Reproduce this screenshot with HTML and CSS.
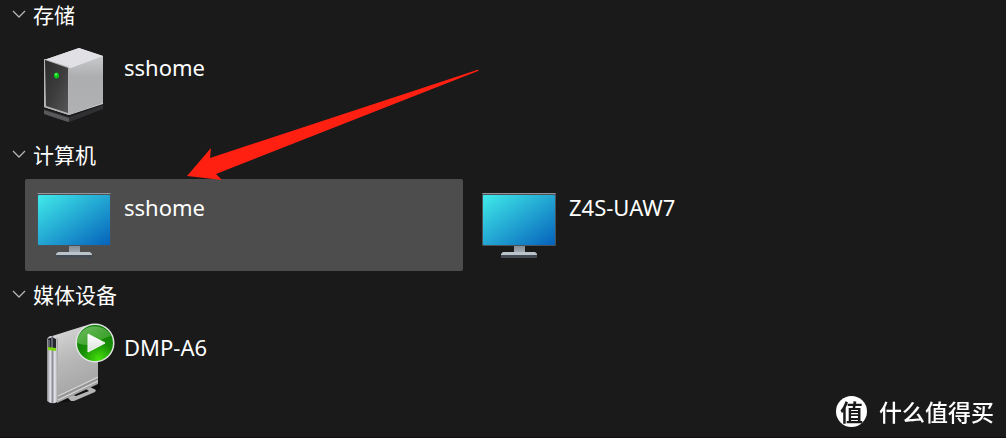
FILE: index.html
```
<!DOCTYPE html>
<html lang="zh-CN">
<head>
  <meta charset="UTF-8">
  <meta name="viewport" content="width=device-width, initial-scale=1">
  <title>网络</title>
  <link rel="stylesheet" href="styles.css">
</head>
<body>
  <svg class="defs" aria-hidden="true">
    <defs>
      <linearGradient id="screen" x1="0" y1="0" x2="1" y2="1">
        <stop offset="0" stop-color="#40eaea"/>
        <stop offset="1" stop-color="#0562bb"/>
      </linearGradient>
      <linearGradient id="neck" x1="0" y1="0" x2="0" y2="1">
        <stop offset="0" stop-color="#7d8790"/>
        <stop offset="1" stop-color="#a5adb5"/>
      </linearGradient>
      <linearGradient id="front" x1="0" y1="0" x2="1" y2="1">
        <stop offset="0" stop-color="#2c2c2c"/>
        <stop offset="0.5" stop-color="#3c3c3c"/>
        <stop offset="1" stop-color="#565656"/>
      </linearGradient>
      <linearGradient id="side" x1="0" y1="0" x2="0" y2="1">
        <stop offset="0" stop-color="#c9cacc"/>
        <stop offset="0.35" stop-color="#adaeb0"/>
        <stop offset="1" stop-color="#b0b1b3"/>
      </linearGradient>
      <linearGradient id="panel" x1="0" y1="0" x2="0.3" y2="1">
        <stop offset="0" stop-color="#dedede"/>
        <stop offset="0.5" stop-color="#b9b9b9"/>
        <stop offset="1" stop-color="#a3a3a3"/>
      </linearGradient>
      <linearGradient id="spine" x1="0" y1="0" x2="1" y2="0">
        <stop offset="0" stop-color="#86868a"/>
        <stop offset="0.3" stop-color="#e6e6ee"/>
        <stop offset="0.5" stop-color="#8c8c96"/>
        <stop offset="0.7" stop-color="#e8e8f0"/>
        <stop offset="1" stop-color="#9a9a9c"/>
      </linearGradient>
      <radialGradient id="badge" cx="0.6" cy="0.95" r="0.9">
        <stop offset="0" stop-color="#46e00c"/>
        <stop offset="0.5" stop-color="#189006"/>
        <stop offset="1" stop-color="#127a0a"/>
      </radialGradient>
      <linearGradient id="gloss" x1="0" y1="0" x2="1" y2="1">
        <stop offset="0" stop-color="#9be08a" stop-opacity="0.7"/>
        <stop offset="1" stop-color="#6cc455" stop-opacity="0.3"/>
      </linearGradient>
      <linearGradient id="play" x1="0" y1="0" x2="0" y2="1">
        <stop offset="0" stop-color="#ffffff"/>
        <stop offset="1" stop-color="#d8e2d8"/>
      </linearGradient>
      <symbol id="icon-pc" viewBox="0 0 80 80">
        <path d="M35 60h11v8H35z" fill="url(#neck)"/>
        <path d="M24 67h32l2 2v4H22v-4z" fill="#434a51"/>
        <path d="M24 67h32l2 2v1H22v-1z" fill="#b9c3cb"/>
        <rect x="3" y="8" width="74" height="53" rx="1" fill="#4b5157"/>
        <path d="M4 8h72l1 1H3z" fill="#90969b"/>
        <rect x="4" y="10" width="72" height="50" rx="1" fill="url(#screen)"/>
      </symbol>
    </defs>
  </svg>

  <main>
    <section class="group">
      <button class="group-header" type="button">
        <svg class="chevron" viewBox="0 0 14 8"><path d="M1 1l6 6 6-6"/></svg>
        <span>存储</span>
      </button>
      <div class="items">
        <a class="item" href="#">
          <svg class="icon" viewBox="0 0 80 80">
            <path d="M10 64l25 8 34-12v4L38 76l-3 1-25-8z" fill="#303032"/>
            <path d="M10 65l25 8v4l-4-1-21-7z" fill="#59595b"/>
            <path d="M10 15L45 3l24 8v48L35 70l-25-8z" fill="#d2d3d5"/>
            <path d="M35 22l34-11v47L35 70z" fill="url(#side)"/>
            <path d="M10 15L45 3l24 8-32 12h-2z" fill="#e0e0e5"/>
            <path d="M10 14l25 8v48l-25-8z" fill="#b4b4b6"/>
            <path d="M11 15l23 8v45l-22-7z" fill="url(#front)"/>
            <ellipse cx="22.5" cy="30.5" rx="2.5" ry="3" fill="#06c812"/>
            <circle cx="22" cy="29.5" r="1" fill="#7dff7d"/>
          </svg>
          <span class="name">sshome</span>
        </a>
      </div>
    </section>

    <section class="group">
      <button class="group-header" type="button">
        <svg class="chevron" viewBox="0 0 14 8"><path d="M1 1l6 6 6-6"/></svg>
        <span>计算机</span>
      </button>
      <div class="items">
        <a class="item selected" href="#">
          <svg class="icon"><use href="#icon-pc"/></svg>
          <span class="name">sshome</span>
          <svg class="arrow" viewBox="0 0 294 112" aria-hidden="true">
            <path d="M1 107L25 79l-1 10L291 1q3-1 1 1L30 105l6 6z"/>
          </svg>
        </a>
        <a class="item" href="#">
          <svg class="icon"><use href="#icon-pc"/></svg>
          <span class="name">Z4S-UAW7</span>
        </a>
      </div>
    </section>

    <section class="group">
      <button class="group-header" type="button">
        <svg class="chevron" viewBox="0 0 14 8"><path d="M1 1l6 6 6-6"/></svg>
        <span>媒体设备</span>
      </button>
      <div class="items">
        <a class="item" href="#">
          <svg class="icon" viewBox="0 0 80 80">
            <path d="M22 78l18-2 27-13-3-10z" fill="#101010"/>
            <path d="M33 72l6-2 3 1 13-5-3-2 4-2 6 3-1 2-21 9h-3z" fill="#b4b4b4"/>
            <path d="M15 12L50 1q10-3 14 2v56L23 78z" fill="url(#panel)"/>
            <path d="M24 75l40-19M24 71l40-19" fill="none" stroke="#dcdcdc" stroke-width="1"/>
            <path d="M24 73l40-19" fill="none" stroke="#8a8a8a" stroke-width="1"/>
            <path d="M13 14q1-3 5-3t6 3l-1 63q-5 3-10-1z" fill="url(#spine)"/>
            <path d="M14 14q4-3 8 0v10h-8z" fill="#25272d"/>
            <path d="M18 13v10M15 15v7" stroke="#9aa4b4" stroke-width="1"/>
            <path d="M14 22l8 1v3l-8-1z" fill="#78d80a"/>
            <circle cx="61" cy="18" r="19.5" fill="#dfe6df"/>
            <circle cx="61" cy="18" r="18" fill="url(#badge)"/>
            <path d="M43 18a18 18 0 0 1 34-7q-10 3-16 7-8 4-18 0z" fill="url(#gloss)"/>
            <path d="M54 9l17 9-17 9z" fill="url(#play)" stroke="#f4f8f4" stroke-width="1" stroke-linejoin="round"/>
          </svg>
          <span class="name">DMP-A6</span>
        </a>
      </div>
    </section>
  </main>

  <div class="watermark">
    <span class="logo">值</span>
    <span>什么值得买</span>
  </div>
</body>
</html>
```

FILE: styles.css
```
* {
  box-sizing: border-box;
}

body {
  margin: 0;
  min-height: 100vh;
  background: #1a1a1a;
  border-bottom: 1px solid #150c14;
  color: #fff;
  font-family: "Noto Sans", "Noto Sans CJK SC", sans-serif;
  font-size: 22px;
}

.defs {
  position: absolute;
  width: 0;
  height: 0;
}

.group {
  padding-bottom: 9px;
}

.group-header {
  display: flex;
  align-items: center;
  gap: 7px;
  width: 100%;
  height: 28px;
  margin-bottom: 11px;
  padding: 0 0 0 12px;
  border: none;
  background: none;
  color: inherit;
  font-family: "Noto Sans CJK SC", sans-serif;
  font-size: 21px;
  text-align: left;
}

.chevron {
  width: 14px;
  height: 8px;
  fill: none;
  stroke: #b4b4b4;
  stroke-width: 1.3;
}

.items {
  display: grid;
  grid-template-columns: repeat(auto-fill, 438px);
  gap: 7px;
  padding-left: 25px;
}

.item {
  position: relative;
  display: flex;
  gap: 10px;
  height: 92px;
  padding: 6px 9px;
  border-radius: 2px;
  color: inherit;
  text-decoration: none;
}

.item.selected {
  background: #4d4d4d;
}

.icon {
  width: 80px;
  height: 80px;
  overflow: visible;
}

.name {
  padding-top: 7px;
  line-height: 30px;
}

/* pointer to the selected computer */
.arrow {
  position: absolute;
  left: 161px;
  top: -110px;
  width: 294px;
  height: 112px;
  fill: #ff2012;
}

.watermark {
  position: fixed;
  right: 12px;
  bottom: 11px;
  display: flex;
  align-items: center;
  gap: 12px;
  font-family: "Noto Sans CJK SC", sans-serif;
  font-size: 23px;
  font-weight: 500;
  line-height: 32px;
}

.logo {
  width: 31px;
  height: 31px;
  border-radius: 50%;
  background: #fff;
  color: #1a1a1a;
  font-weight: 700;
  line-height: 30px;
  text-align: center;
}
```
